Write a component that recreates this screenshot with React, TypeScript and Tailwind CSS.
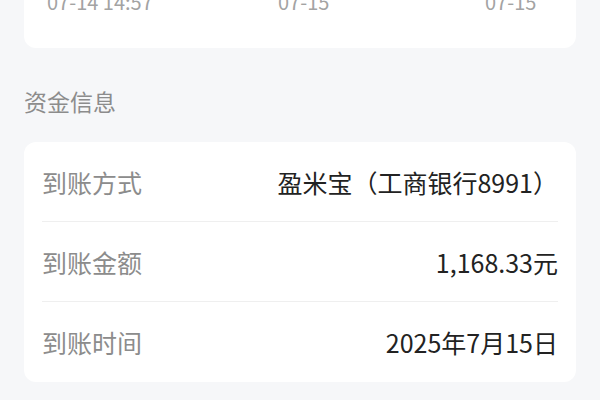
import React from "react";

const font = { fontFamily: '"Noto Sans CJK SC", "Noto Sans", sans-serif' };

const rows = [
  { label: "到账方式", value: "盈米宝（工商银行8991）" },
  { label: "到账金额", value: "1,168.33元" },
  { label: "到账时间", value: "2025年7月15日" },
];

export default function App() {
  return (
    <div
      className="w-[600px] h-[400px] overflow-hidden bg-[#f6f7f9] px-[24px]"
      style={font}
    >
      <div className="-mt-[20px] h-[68px] rounded-[12px] bg-white pt-[12px] pl-[23px]">
        <div className="grid grid-cols-[231px_207px_auto] text-[20px] leading-[20px] text-[#a3a3a3]">
          <span>07-14 14:57</span>
          <span>07-15</span>
          <span>07-15</span>
        </div>
      </div>

      <div className="mt-[37px] mb-[25px] text-[23px] leading-[32px] text-[#8c8c8c]">
        资金信息
      </div>

      <div className="rounded-[12px] bg-white px-[18px]">
        {rows.map((r, i) => (
          <div
            key={r.label}
            className={
              "flex h-[80px] items-center justify-between " +
              (i < rows.length - 1 ? "border-b border-[#efefef]" : "")
            }
          >
            <span className="text-[25px] leading-[32px] text-[#8c8c8c]">{r.label}</span>
            <span className="text-[25px] leading-[32px] text-[#222222]">{r.value}</span>
          </div>
        ))}
      </div>
    </div>
  );
}
